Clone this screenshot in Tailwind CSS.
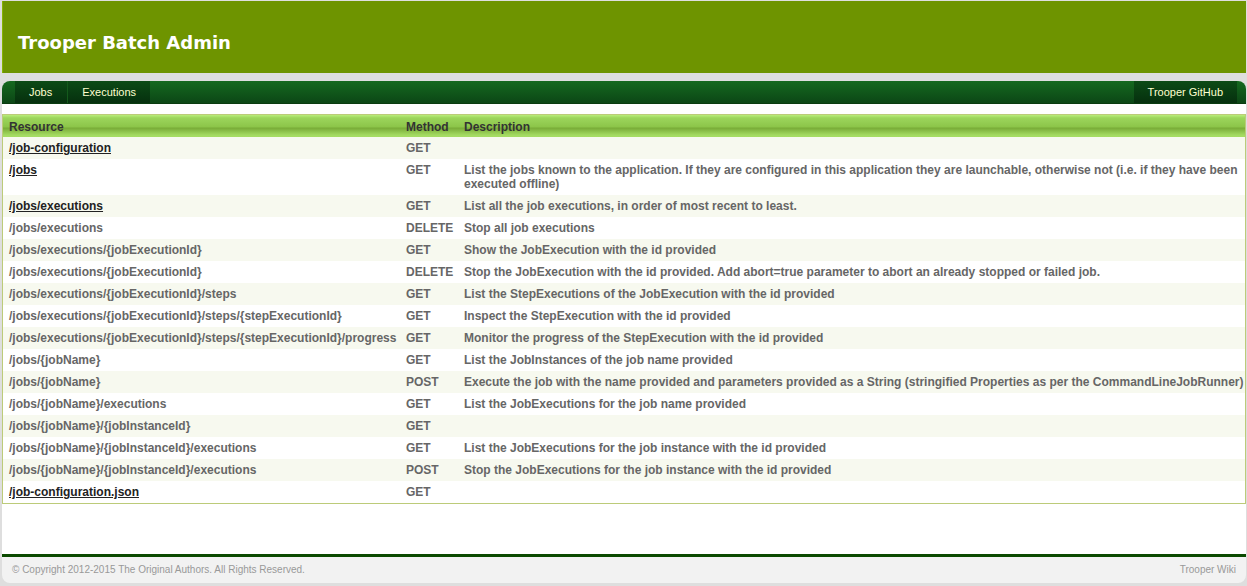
<!DOCTYPE html>
<html lang="en">
<head>
<meta charset="utf-8">
<meta name="viewport" content="width=device-width, initial-scale=1">
<title>Trooper Batch Admin</title>
<script src="https://cdn.jsdelivr.net/npm/@tailwindcss/browser@4"></script>
</head>
<body class="bg-[#dedede] font-['Liberation_Sans',Arial,sans-serif]">
<div class="flex min-h-screen flex-col pt-px pr-px pb-[3px] pl-0.5">
  <header class="border-l border-[#86b300] bg-[#6e9400] px-[15px] pt-[30px] pb-[18px]">
    <h1 class="font-['DejaVu_Sans',Verdana,sans-serif] text-[18px] leading-6 font-bold text-white">Trooper Batch Admin</h1>
  </header>

  <nav class="mt-2 flex justify-between rounded-t-lg border-b border-[#0a3c10] bg-linear-to-b from-[#15691f] to-[#0c4716] pr-[9px] pl-[13px] text-[11px] leading-[22px] text-[#ffffd0]">
    <div class="flex">
      <a href="#" class="border-r border-[#145a1c] bg-linear-to-b from-[#0c4b16] to-[#06300e] pr-[15px] pl-3.5">Jobs</a>
      <a href="#" class="bg-linear-to-b from-[#0c4b16] to-[#06300e] px-3.5">Executions</a>
    </div>
    <a href="#" class="bg-linear-to-b from-[#0c4b16] to-[#06300e] px-3.5">Trooper GitHub</a>
  </nav>

  <main class="grow bg-white pt-2.5 pb-[50px]">
    <div class="border border-[#bccb79]">
      <table class="w-full table-fixed border-collapse text-left text-xs leading-[14px] font-bold text-[#666] [&_a]:text-[#222] [&_a]:underline [&_td]:py-1 [&_td]:pl-1.5 [&_td]:align-top [&_th]:pt-[5px] [&_th]:pb-[3px] [&_th]:pl-1.5">
        <colgroup><col class="w-[397px]"><col class="w-[58px]"><col></colgroup>
        <thead class="text-[#333]">
          <tr class="bg-[linear-gradient(to_bottom,#b9ee7b_0px,#9cd55c_3px,#8cc549_12px,#78ab37_13px,#a3da61_20px,#a6dd64_22px)]"><th>Resource</th><th>Method</th><th>Description</th></tr>
        </thead>
        <tbody class="[&>tr:nth-child(odd)]:bg-[#f7f9ef]">
          <tr><td><a href="#">/job-configuration</a></td><td>GET</td><td></td></tr>
          <tr><td><a href="#">/jobs</a></td><td>GET</td><td>List the jobs known to the application. If they are configured in this application they are launchable, otherwise not (i.e. if they have been executed offline)</td></tr>
          <tr><td><a href="#">/jobs/executions</a></td><td>GET</td><td>List all the job executions, in order of most recent to least.</td></tr>
          <tr><td>/jobs/executions</td><td>DELETE</td><td>Stop all job executions</td></tr>
          <tr><td>/jobs/executions/{jobExecutionId}</td><td>GET</td><td>Show the JobExecution with the id provided</td></tr>
          <tr><td>/jobs/executions/{jobExecutionId}</td><td>DELETE</td><td>Stop the JobExecution with the id provided. Add abort=true parameter to abort an already stopped or failed job.</td></tr>
          <tr><td>/jobs/executions/{jobExecutionId}/steps</td><td>GET</td><td>List the StepExecutions of the JobExecution with the id provided</td></tr>
          <tr><td>/jobs/executions/{jobExecutionId}/steps/{stepExecutionId}</td><td>GET</td><td>Inspect the StepExecution with the id provided</td></tr>
          <tr><td>/jobs/executions/{jobExecutionId}/steps/{stepExecutionId}/progress</td><td>GET</td><td>Monitor the progress of the StepExecution with the id provided</td></tr>
          <tr><td>/jobs/{jobName}</td><td>GET</td><td>List the JobInstances of the job name provided</td></tr>
          <tr><td>/jobs/{jobName}</td><td>POST</td><td class="lg:whitespace-nowrap">Execute the job with the name provided and parameters provided as a String (stringified Properties as per the CommandLineJobRunner)</td></tr>
          <tr><td>/jobs/{jobName}/executions</td><td>GET</td><td>List the JobExecutions for the job name provided</td></tr>
          <tr><td>/jobs/{jobName}/{jobInstanceId}</td><td>GET</td><td></td></tr>
          <tr><td>/jobs/{jobName}/{jobInstanceId}/executions</td><td>GET</td><td>List the JobExecutions for the job instance with the id provided</td></tr>
          <tr><td>/jobs/{jobName}/{jobInstanceId}/executions</td><td>POST</td><td>Stop the JobExecutions for the job instance with the id provided</td></tr>
          <tr><td><a href="#">/job-configuration.json</a></td><td>GET</td><td></td></tr>
        </tbody>
      </table>
    </div>
  </main>

  <div class="h-[3px] bg-[#0b4a00]"></div>
  <footer class="flex justify-between rounded-b-lg bg-[#f2f2f2] px-2.5 py-[5px] text-[10px] leading-4 text-[#999]">
    <p>© Copyright 2012-2015 The Original Authors. All Rights Reserved.</p>
    <a href="#">Trooper Wiki</a>
  </footer>
</div>
</body>
</html>
